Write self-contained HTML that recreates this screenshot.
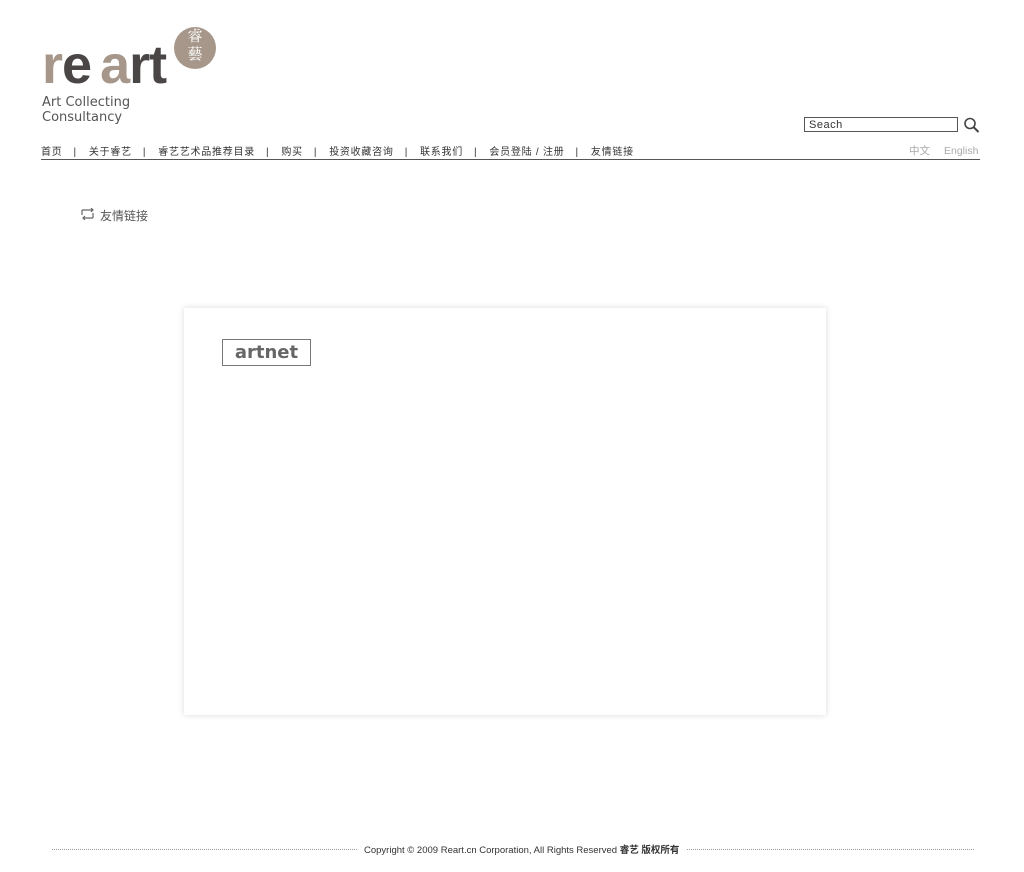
<!DOCTYPE html>
<html><head><meta charset="utf-8"><style>
body{margin:0;background:#fff;width:1024px;height:872px;position:relative;font-family:"Liberation Sans","Noto Sans CJK SC",sans-serif;overflow:hidden}
.a{position:absolute}
.nav{left:41px;top:143px;font-size:10px;color:#333;white-space:nowrap;letter-spacing:0.75px}
.nav span{margin:0 12px 0 11px}
</style></head><body>
<div class="a" style="left:42px;top:38px;font-size:54px;font-weight:bold;letter-spacing:-1px;line-height:54px;white-space:nowrap"><span style="color:#a6978a">r</span><span style="color:#4a4646">e</span><span style="display:inline-block;width:9px"></span><span style="color:#a6978a">a</span><span style="color:#4a4646">rt</span></div>
<div class="a" style="left:174px;top:27px;width:42px;height:42px;border-radius:50%;background:#a6978a;color:#fff;font-size:15px;line-height:18px;text-align:center;font-family:'Noto Serif CJK SC',serif">睿<br>藝</div>
<div class="a" style="left:42px;top:95px;font-size:13px;color:#555;line-height:15px;font-family:'DejaVu Sans',sans-serif">Art Collecting<br>Consultancy</div>
<div class="a" style="left:804px;top:117px;width:148px;height:13px;border:1px solid #555;font-size:11px;line-height:14px;padding-left:4px;color:#333;letter-spacing:0.5px">Seach</div>
<svg class="a" style="left:963px;top:117px" width="18" height="16"><circle cx="7" cy="6.5" r="5" fill="none" stroke="#444" stroke-width="1.6"/><path d="M10.5 10l5 5" stroke="#444" stroke-width="2"/></svg>
<div class="a" style="left:909px;top:143px;font-size:10.5px;color:#aaa;white-space:nowrap">中文<span style="display:inline-block;width:14px"></span>English</div>
<div class="a nav">首页<span>|</span>关于睿艺<span>|</span>睿艺艺术品推荐目录<span>|</span>购买<span>|</span>投资收藏咨询<span>|</span>联系我们<span>|</span>会员登陆 / 注册<span>|</span>友情链接</div>
<div class="a" style="left:41px;top:159px;width:939px;height:1px;background:#555"></div>
<svg class="a" style="left:80px;top:208px" width="16" height="12"><path d="M2 2h11M2 2v5M13 10H3M13 10V5M11 0l2 2-2 2M5 8l-2 2 2 2" fill="none" stroke="#666" stroke-width="1.2"/></svg>
<div class="a" style="left:100px;top:207px;font-size:12px;color:#555">友情链接</div>
<div class="a" style="left:184px;top:308px;width:642px;height:407px;background:#fff;box-shadow:0 0 6px rgba(0,0,0,0.15)"></div>
<div class="a" style="left:222px;top:339px;width:87px;height:25px;border:1px solid #777;text-align:center;font:bold 18px/25px 'DejaVu Sans',sans-serif;color:#666">artnet</div>
<div class="a" style="left:52px;top:849px;width:305px;border-top:1px dotted #999"></div>
<div class="a" style="left:687px;top:849px;width:287px;border-top:1px dotted #999"></div>
<div class="a" style="left:364px;top:842px;font-size:9.5px;color:#333;white-space:nowrap">Copyright © 2009 Reart.cn Corporation, All Rights Reserved <b>睿艺 版权所有</b></div>
</body></html>
